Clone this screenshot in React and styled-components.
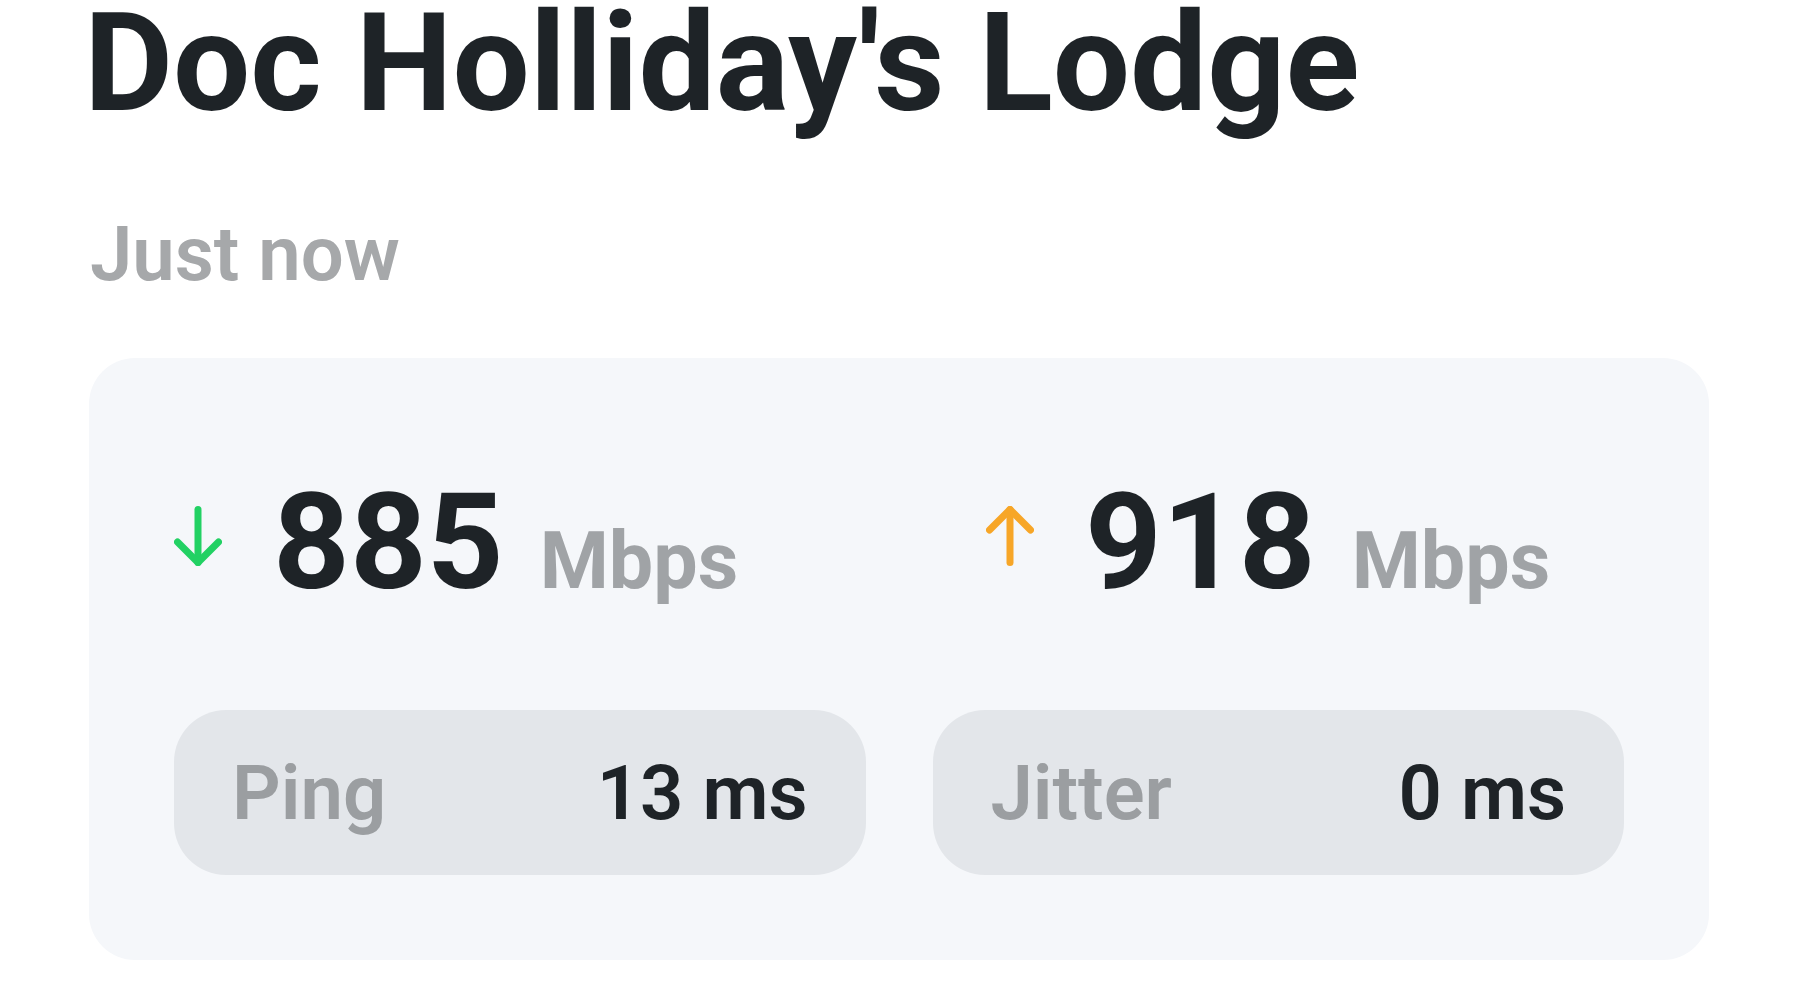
import React from "react";
import styled, { createGlobalStyle } from "styled-components";

const GlobalStyle = createGlobalStyle`
  body {
    margin: 0;
    background: #ffffff;
    font-family: Roboto, "Liberation Sans", sans-serif;
  }
`;

const Page = styled.div`
  padding: 0 90px;
  width: 1800px;
  height: 1000px;
  box-sizing: border-box;
  overflow: hidden;
`;

const Title = styled.h1`
  margin: 0 0 0 -6px;
  font-size: 137px;
  line-height: 0.93;
  font-weight: 700;
  color: #1e2327;
`;

const Updated = styled.div`
  margin-top: 89px;
  font-size: 76px;
  line-height: 1;
  font-weight: 600;
  color: #a6a8aa;
`;

const Card = styled.div`
  margin-top: 66px;
  margin-left: -1px;
  width: 1620px;
  height: 602px;
  box-sizing: border-box;
  padding: 118px 85px 0;
  background: #f5f7fa;
  border-radius: 46px;
`;

const SpeedRow = styled.div`
  display: grid;
  grid-template-columns: 812px 1fr;
`;

const Speed = styled.div`
  display: flex;
  align-items: center;
`;

const ArrowIcon = styled.svg`
  width: 48px;
  height: 60px;
  margin-right: 51px;
  margin-bottom: 14px;
  flex-shrink: 0;
`;

const Reading = styled.div`
  display: flex;
  align-items: baseline;
  gap: 36px;
`;

const Value = styled.span`
  font-size: 134px;
  line-height: 1;
  font-weight: 700;
  color: #1e2327;
`;

const Unit = styled.span`
  font-size: 79px;
  line-height: 1;
  font-weight: 700;
  color: #a0a3a6;
`;

const StatRow = styled.div`
  margin-top: 100px;
  display: grid;
  grid-template-columns: 1fr 1fr;
  gap: 67px;
`;

const Stat = styled.div`
  height: 165px;
  box-sizing: border-box;
  padding: 0 58px;
  display: flex;
  align-items: center;
  justify-content: space-between;
  background: #e3e6ea;
  border-radius: 52px;
  font-size: 76px;
  font-weight: 600;
  line-height: 1;
`;

const StatLabel = styled.span`
  color: #9b9ea1;
`;

const StatValue = styled.span`
  color: #1e2327;
`;

const Arrow = ({ up, color }) => (
  <ArrowIcon viewBox="0 0 48 60" fill="none" stroke={color} strokeWidth="7" strokeLinecap="round" strokeLinejoin="round">
    {up ? (
      <>
        <line x1="24" y1="56.5" x2="24" y2="3.5" />
        <polyline points="3.5,24 24,3.5 44.5,24" />
      </>
    ) : (
      <>
        <line x1="24" y1="3.5" x2="24" y2="56.5" />
        <polyline points="3.5,36 24,56.5 44.5,36" />
      </>
    )}
  </ArrowIcon>
);

const App = () => {
  return (
    <Page>
      <GlobalStyle />
      <Title>Doc Holliday's Lodge</Title>
      <Updated>Just now</Updated>
      <Card>
        <SpeedRow>
          <Speed>
            <Arrow color="#22d163" />
            <Reading>
              <Value>885</Value>
              <Unit>Mbps</Unit>
            </Reading>
          </Speed>
          <Speed>
            <Arrow up color="#f7a627" />
            <Reading>
              <Value>918</Value>
              <Unit>Mbps</Unit>
            </Reading>
          </Speed>
        </SpeedRow>
        <StatRow>
          <Stat>
            <StatLabel>Ping</StatLabel>
            <StatValue>13 ms</StatValue>
          </Stat>
          <Stat>
            <StatLabel>Jitter</StatLabel>
            <StatValue>0 ms</StatValue>
          </Stat>
        </StatRow>
      </Card>
    </Page>
  );
};

export default App;
